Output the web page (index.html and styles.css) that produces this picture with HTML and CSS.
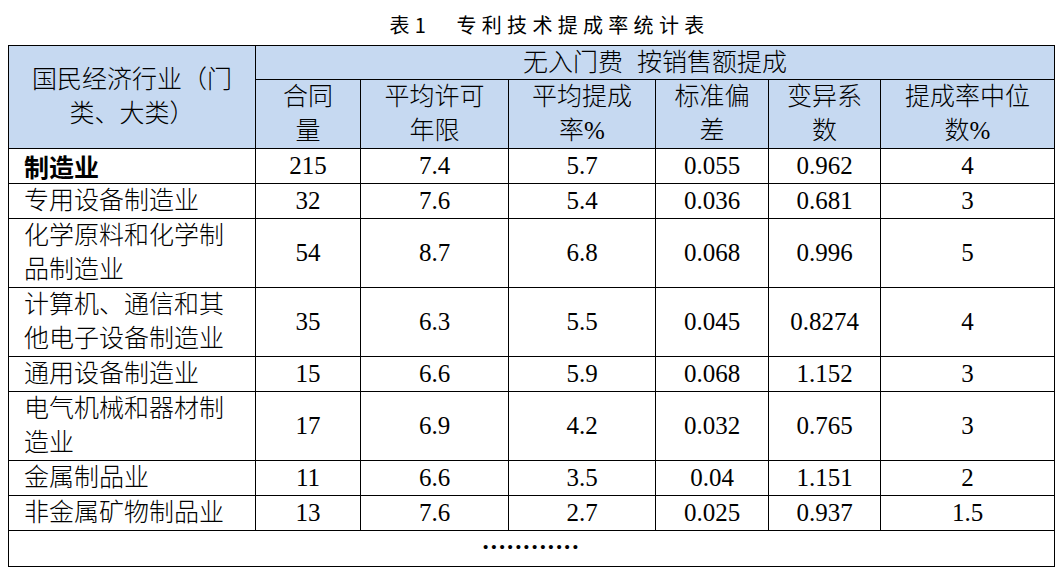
FILE: index.html
```html
<!DOCTYPE html>
<html lang="zh-CN">
<head>
<meta charset="utf-8">
<title>专利技术提成率统计表</title>
<link rel="stylesheet" href="styles.css">
</head>
<body>
<div class="page">
  <div class="caption">表1　专利技术提成率统计表</div>
  <table class="stats">
    <colgroup>
      <col class="c-ind">
      <col class="c-n">
      <col class="c-yr">
      <col class="c-rate">
      <col class="c-sd">
      <col class="c-cv">
      <col class="c-med">
    </colgroup>
    <thead>
      <tr class="h1">
        <th rowspan="2" class="hd-ind">国民经济行业（门类、大类）</th>
        <th colspan="6" class="hd-group">无入门费<span class="gap"></span>按销售额提成</th>
      </tr>
      <tr class="h2">
        <th>合同<br>量</th>
        <th>平均许可<br>年限</th>
        <th>平均提成<br>率<span class="pct">%</span></th>
        <th>标准偏<br>差</th>
        <th>变异系<br>数</th>
        <th>提成率中位<br>数<span class="pct">%</span></th>
      </tr>
    </thead>
    <tbody>
      <tr>
        <td class="ind strong">制造业</td>
        <td>215</td><td>7.4</td><td>5.7</td><td>0.055</td><td>0.962</td><td>4</td>
      </tr>
      <tr>
        <td class="ind">专用设备制造业</td>
        <td>32</td><td>7.6</td><td>5.4</td><td>0.036</td><td>0.681</td><td>3</td>
      </tr>
      <tr>
        <td class="ind">化学原料和化学制品制造业</td>
        <td>54</td><td>8.7</td><td>6.8</td><td>0.068</td><td>0.996</td><td>5</td>
      </tr>
      <tr>
        <td class="ind">计算机、通信和其他电子设备制造业</td>
        <td>35</td><td>6.3</td><td>5.5</td><td>0.045</td><td>0.8274</td><td>4</td>
      </tr>
      <tr>
        <td class="ind">通用设备制造业</td>
        <td>15</td><td>6.6</td><td>5.9</td><td>0.068</td><td>1.152</td><td>3</td>
      </tr>
      <tr>
        <td class="ind">电气机械和器材制造业</td>
        <td>17</td><td>6.9</td><td>4.2</td><td>0.032</td><td>0.765</td><td>3</td>
      </tr>
      <tr>
        <td class="ind">金属制品业</td>
        <td>11</td><td>6.6</td><td>3.5</td><td>0.04</td><td>1.151</td><td>2</td>
      </tr>
      <tr>
        <td class="ind">非金属矿物制品业</td>
        <td>13</td><td>7.6</td><td>2.7</td><td>0.025</td><td>0.937</td><td>1.5</td>
      </tr>
      <tr class="more">
        <td colspan="7" class="dots-cell"><span class="dots">............</span></td>
      </tr>
    </tbody>
  </table>
</div>
</body>
</html>
```
FILE: styles.css
```css
html, body {
  margin: 0;
  padding: 0;
  background: #ffffff;
}

.page {
  padding: 8px;
  color: #000000;
}

.caption {
  font-family: "Noto Sans CJK SC", "Liberation Sans", sans-serif;
  font-size: 20px;
  font-weight: 400;
  letter-spacing: 5.3px;
  line-height: 34px;
  height: 37px;
  text-align: center;
  padding-left: 36px;
  color: #000000;
}

.stats {
  border-collapse: collapse;
  table-layout: fixed;
  width: 1046px;
  font-family: "Liberation Serif", "Noto Sans CJK SC", serif;
  font-size: 25px;
  color: #000000;
}

.c-ind { width: 247px; }
.c-n { width: 105px; }
.c-yr { width: 148px; }
.c-rate { width: 147px; }
.c-sd { width: 113px; }
.c-cv { width: 112px; }
.c-med { width: 174px; }

.stats th,
.stats td {
  border: 1px solid #000000;
  padding: 0;
  line-height: 34px;
  text-align: center;
  vertical-align: middle;
  font-weight: 300;
}

.stats thead th {
  background: #c6d9f1;
}

.stats .h1 th {
  line-height: 33px;
}

.stats .h1 .hd-ind {
  line-height: 34px;
  padding: 0 15px;
}

.pct {
  font-family: "Liberation Serif", serif;
  font-weight: 400;
}

.gap {
  display: inline-block;
  width: 14px;
}

.stats td.ind {
  text-align: left;
  padding: 0 15px;
}

.stats td.strong {
  font-family: "Noto Sans CJK SC", sans-serif;
  font-weight: 700;
}

.stats td.dots-cell {
  height: 34px;
  line-height: 18px;
  vertical-align: top;
  padding-top: 1px;
}

.dots {
  font-weight: 700;
  letter-spacing: 1.9px;
}
```
